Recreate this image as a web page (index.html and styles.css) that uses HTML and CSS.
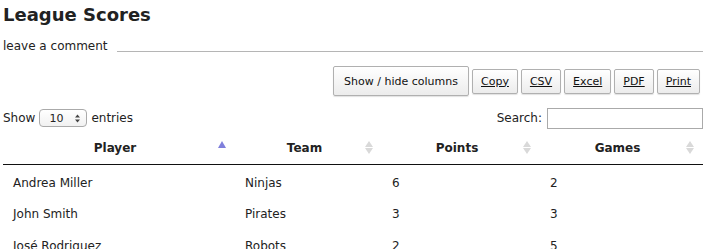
FILE: index.html
```html
<!DOCTYPE html>
<html lang="en">
<head>
  <meta charset="UTF-8" />
  <title>League Scores</title>
  <link rel="stylesheet" href="styles.css">
</head>
<body>

<h1>League Scores</h1>

<div class="comment-row">
  <label for="comment">leave a comment</label>
  <input type="text" id="comment" />
</div>

<div class="toolbar">
  <button class="btn btn-colvis">Show / hide columns</button>
  <button class="btn">Copy</button>
  <button class="btn">CSV</button>
  <button class="btn">Excel</button>
  <button class="btn">PDF</button>
  <button class="btn">Print</button>
</div>

<div class="controls">
  <div class="length">
    Show
    <span class="select">10
      <svg class="spin" width="5" height="9" viewBox="0 0 5 9">
        <path d="M0 3.5 L2.5 0.5 L5 3.5 Z M0 5.5 L2.5 8.5 L5 5.5 Z" fill="#444"/>
      </svg>
    </span>
    entries
  </div>
  <div class="search">
    Search: <input type="text" />
  </div>
</div>

<table class="scores">
  <thead>
    <tr>
      <th class="col-player">Player <span class="sort asc"></span></th>
      <th class="col-team">Team <span class="sort both"></span></th>
      <th class="col-points">Points <span class="sort both"></span></th>
      <th class="col-games">Games <span class="sort both"></span></th>
    </tr>
  </thead>
  <tbody>
    <tr><td>Andrea Miller</td><td>Ninjas</td><td>6</td><td>2</td></tr>
    <tr><td>John Smith</td><td>Pirates</td><td>3</td><td>3</td></tr>
    <tr><td>José Rodriguez</td><td>Robots</td><td>2</td><td>5</td></tr>
  </tbody>
</table>

</body>
</html>
```

FILE: styles.css
```css
* { box-sizing: border-box; }

body {
  font-family: "DejaVu Sans", sans-serif;
  font-size: 12px;
  color: #222;
  background: #fff;
  margin: 0;
  padding: 0 1px 0 3px;
}

h1 {
  font-size: 18px;
  font-weight: bold;
  margin: 4px 0 9px;
  line-height: 22px;
}

.comment-row {
  display: flex;
  align-items: flex-end;
  gap: 9px;
  height: 18px;
}

.comment-row input {
  flex: 1;
  border: none;
  border-bottom: 1px solid #b5b5b5;
  height: 14px;
  margin-bottom: 1px;
  outline: none;
}

.toolbar {
  display: flex;
  justify-content: flex-end;
  align-items: center;
  gap: 3px;
  margin-top: 13px;
  padding-right: 3px;
}

.btn {
  font-family: inherit;
  font-size: 11px;
  color: #111;
  text-decoration: underline;
  background: linear-gradient(#fff, #ececec);
  border: 1px solid #b0b0b0;
  border-radius: 2px;
  box-shadow: 0 1px 1px rgba(0, 0, 0, 0.12);
  height: 25px;
  padding: 0 8px;
  margin: 0;
  cursor: pointer;
}

.btn-colvis {
  text-decoration: none;
  height: 30px;
  padding: 0 10px;
}

.controls {
  display: flex;
  justify-content: space-between;
  align-items: center;
  margin-top: 11px;
  height: 22px;
}

.length {
  display: flex;
  align-items: center;
  gap: 4px;
}

.select {
  display: inline-flex;
  justify-content: space-between;
  align-items: center;
  width: 48px;
  height: 18px;
  border: 1px solid #aaa;
  border-radius: 4px;
  padding: 0 6px 0 9px;
  font-size: 11px;
  background: linear-gradient(#fff, #f1f1f1);
}

.search {
  display: flex;
  align-items: center;
  gap: 5px;
}

.search input {
  width: 156px;
  height: 21px;
  border: 1px solid #aaa;
  outline: none;
}

.scores {
  width: 100%;
  border-collapse: collapse;
  margin-top: 3px;
}

.scores th {
  position: relative;
  font-weight: bold;
  text-align: center;
  height: 32px;
  padding: 0 18px 0 10px;
  border-bottom: 1px solid #111;
}

.col-player { width: 232px; }
.col-team { width: 147px; }
.col-points { width: 158px; }

.sort {
  position: absolute;
  right: 8px;
  top: 9px;
  width: 9px;
  height: 13px;
}

.sort::before,
.sort::after {
  content: "";
  position: absolute;
  left: 0;
  border-left: 4px solid transparent;
  border-right: 4px solid transparent;
}

.sort.asc::before {
  top: 0;
  border-bottom: 7px solid #7f7fdc;
}

.sort.both::before {
  top: 0;
  border-bottom: 6px solid #d9d9d9;
}

.sort.both::after {
  top: 7px;
  border-top: 6px solid #d9d9d9;
}

.scores td {
  height: 31.5px;
  padding: 6px 10px 0;
}
```
